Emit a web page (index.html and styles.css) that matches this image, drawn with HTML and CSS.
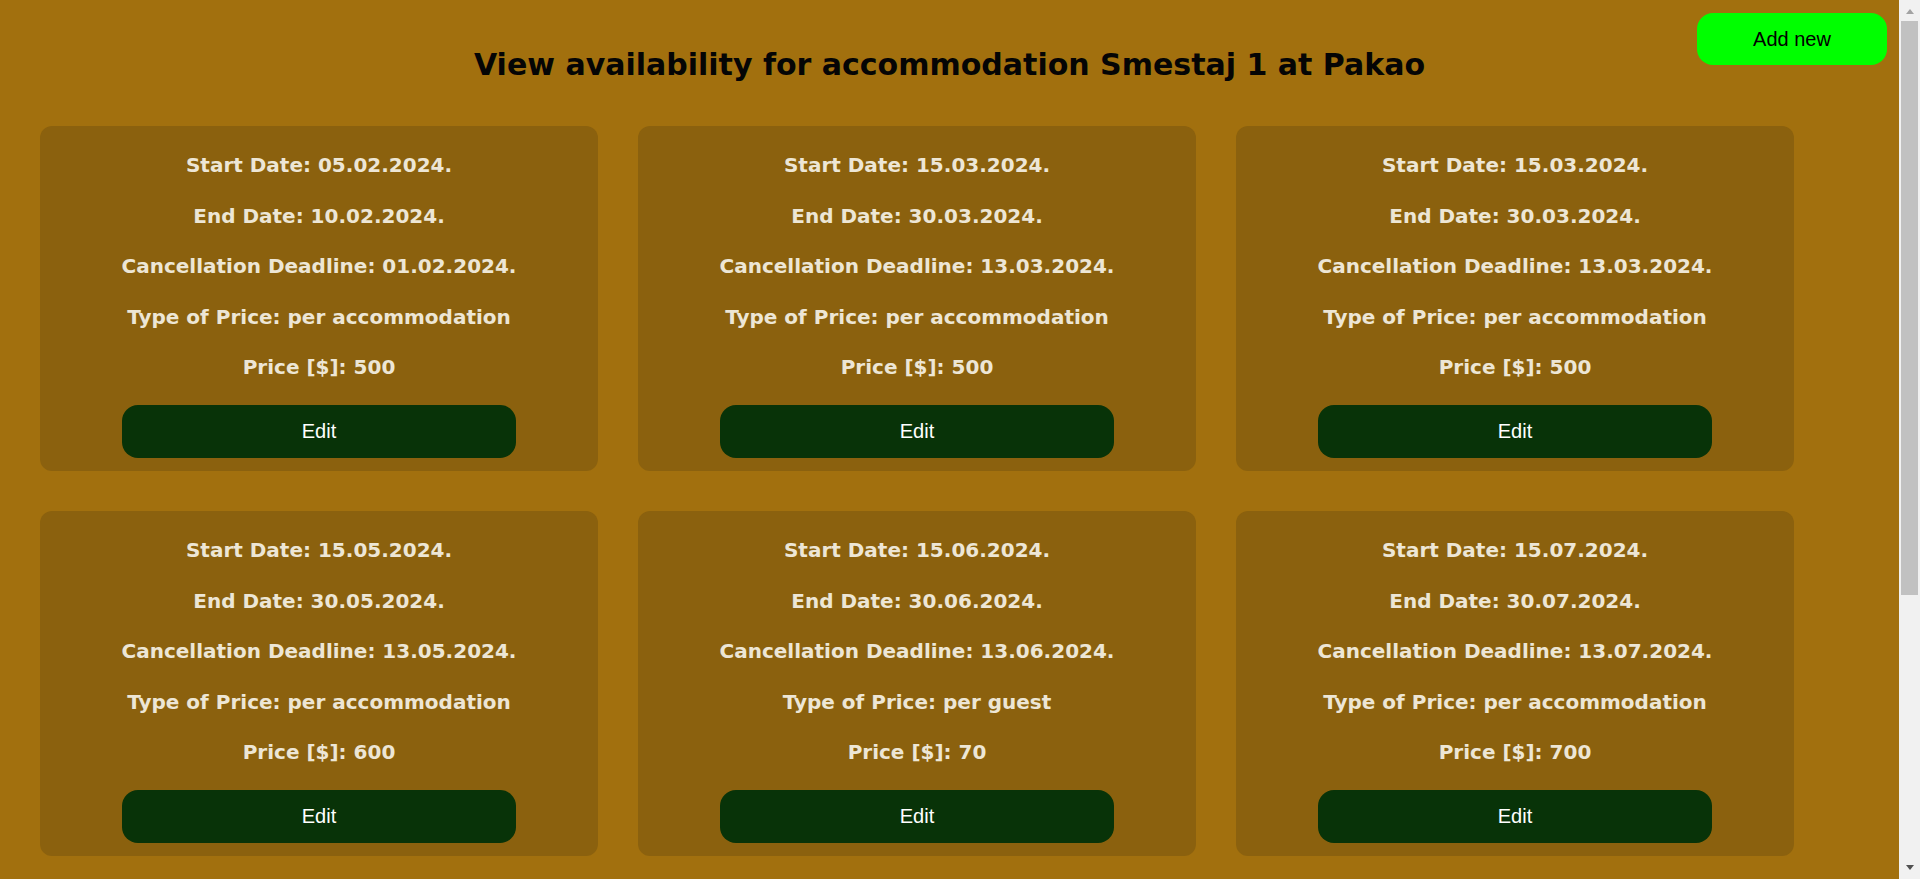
FILE: index.html
```html
<!DOCTYPE html>
<html lang="en">
<head>
<meta charset="utf-8">
<title>View availability</title>
<link rel="stylesheet" href="styles.css">
</head>
<body>
<div class="main">
<div class="page">
  <button class="add-btn">Add new</button>
  <h1 class="title">View availability for accommodation Smestaj 1 at Pakao</h1>
  <div class="grid">
    <div class="card">
      <p>Start Date: 05.02.2024.</p>
      <p>End Date: 10.02.2024.</p>
      <p>Cancellation Deadline: 01.02.2024.</p>
      <p>Type of Price: per accommodation</p>
      <p>Price [$]: 500</p>
      <button class="edit-btn">Edit</button>
    </div>
    <div class="card">
      <p>Start Date: 15.03.2024.</p>
      <p>End Date: 30.03.2024.</p>
      <p>Cancellation Deadline: 13.03.2024.</p>
      <p>Type of Price: per accommodation</p>
      <p>Price [$]: 500</p>
      <button class="edit-btn">Edit</button>
    </div>
    <div class="card">
      <p>Start Date: 15.03.2024.</p>
      <p>End Date: 30.03.2024.</p>
      <p>Cancellation Deadline: 13.03.2024.</p>
      <p>Type of Price: per accommodation</p>
      <p>Price [$]: 500</p>
      <button class="edit-btn">Edit</button>
    </div>
    <div class="card">
      <p>Start Date: 15.05.2024.</p>
      <p>End Date: 30.05.2024.</p>
      <p>Cancellation Deadline: 13.05.2024.</p>
      <p>Type of Price: per accommodation</p>
      <p>Price [$]: 600</p>
      <button class="edit-btn">Edit</button>
    </div>
    <div class="card">
      <p>Start Date: 15.06.2024.</p>
      <p>End Date: 30.06.2024.</p>
      <p>Cancellation Deadline: 13.06.2024.</p>
      <p>Type of Price: per guest</p>
      <p>Price [$]: 70</p>
      <button class="edit-btn">Edit</button>
    </div>
    <div class="card">
      <p>Start Date: 15.07.2024.</p>
      <p>End Date: 30.07.2024.</p>
      <p>Cancellation Deadline: 13.07.2024.</p>
      <p>Type of Price: per accommodation</p>
      <p>Price [$]: 700</p>
      <button class="edit-btn">Edit</button>
    </div>
  </div>
</div>
</div>
<div class="scrollbar" aria-hidden="true">
  <div class="sb-btn"><span class="arrow-up"></span></div>
  <div class="sb-track"><div class="sb-thumb"></div></div>
  <div class="sb-btn"><span class="arrow-down"></span></div>
</div>
</body>
</html>
```

FILE: styles.css
```css
html,
body {
  margin: 0;
  height: 100%;
  overflow: hidden;
  background: #a2700e;
}
body {
  display: flex;
}
.main {
  flex: 1;
  height: 100vh;
  overflow: hidden;
  background: #a2700e;
}
.scrollbar {
  width: 21px;
  flex: none;
  height: 100vh;
  display: flex;
  flex-direction: column;
  background: #f1f1f1;
}
.sb-btn {
  height: 21px;
  flex: none;
  display: flex;
  align-items: center;
  justify-content: center;
}
.arrow-up {
  width: 0;
  height: 0;
  border-left: 4.5px solid transparent;
  border-right: 4.5px solid transparent;
  border-bottom: 5px solid #a3a3a3;
  margin-top: 2px;
}
.arrow-down {
  width: 0;
  height: 0;
  border-left: 4.5px solid transparent;
  border-right: 4.5px solid transparent;
  border-top: 5px solid #505050;
  margin-bottom: 2px;
}
.sb-track {
  flex: 1;
  padding: 0 2px;
}
.sb-thumb {
  height: 574px;
  background: #c1c1c1;
}
.page {
  position: relative;
  box-sizing: border-box;
  padding: 47px 0 40px;
}
.add-btn {
  position: absolute;
  top: 13px;
  right: 12px;
  width: 190px;
  height: 52px;
  border: none;
  border-radius: 16px;
  background: #00ff00;
  color: #000;
  font-family: "Liberation Sans", Arial, sans-serif;
  font-size: 20px;
  padding: 0;
}
.title {
  margin: 0 0 43px;
  text-align: center;
  font-family: "DejaVu Sans", Verdana, sans-serif;
  font-weight: bold;
  font-size: 30px;
  line-height: 36px;
  color: #050505;
}
.grid {
  display: grid;
  grid-template-columns: repeat(3, 558px);
  gap: 40px;
  padding: 0 40px;
}
.card {
  display: flex;
  flex-direction: column;
  align-items: center;
  gap: 24.6px;
  height: 345px;
  box-sizing: border-box;
  padding: 26px 0 13px;
  background: #8b610e;
  border-radius: 12px;
}
.card p {
  margin: 0;
  font-family: "DejaVu Sans", Tahoma, sans-serif;
  font-weight: bold;
  font-size: 20px;
  line-height: 26px;
  color: #ede6d5;
  white-space: nowrap;
}
.edit-btn {
  width: 394px;
  height: 53px;
  flex: none;
  border: none;
  border-radius: 16px;
  background: #083308;
  color: #fff;
  font-family: "Liberation Sans", Arial, sans-serif;
  font-size: 20px;
  padding: 0;
}
```
